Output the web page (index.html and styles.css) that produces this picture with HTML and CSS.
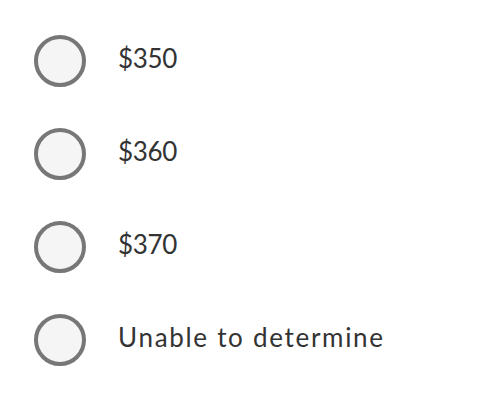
FILE: index.html
```html
<!DOCTYPE html>
<html>
<head>
<meta charset="utf-8">
<link rel="stylesheet" href="styles.css">
</head>
<body>
<div class="options">
  <label class="option"><span class="radio"></span><span class="label amount">$350</span></label>
  <label class="option"><span class="radio"></span><span class="label amount">$360</span></label>
  <label class="option"><span class="radio"></span><span class="label amount">$370</span></label>
  <label class="option"><span class="radio"></span><span class="label">Unable to determine</span></label>
</div>
</body>
</html>
```
FILE: styles.css
```css
html, body {
  margin: 0;
  background: #ffffff;
}
body {
  font-family: Lato, "Open Sans", sans-serif;
}
.options {
  display: flex;
  flex-direction: column;
  padding: 14px 0 0 34px;
}
.option {
  display: flex;
  align-items: center;
  height: 93px;
  gap: 32px;
}
.radio {
  box-sizing: border-box;
  width: 52px;
  height: 52px;
  border-radius: 50%;
  border: 4px solid #777777;
  background: #f5f5f5;
  flex: none;
}
.label {
  font-size: 26px;
  line-height: 1;
  letter-spacing: 1.7px;
  color: #333333;
  margin-bottom: 5px;
}
.label.amount {
  letter-spacing: -0.3px;
}
```
